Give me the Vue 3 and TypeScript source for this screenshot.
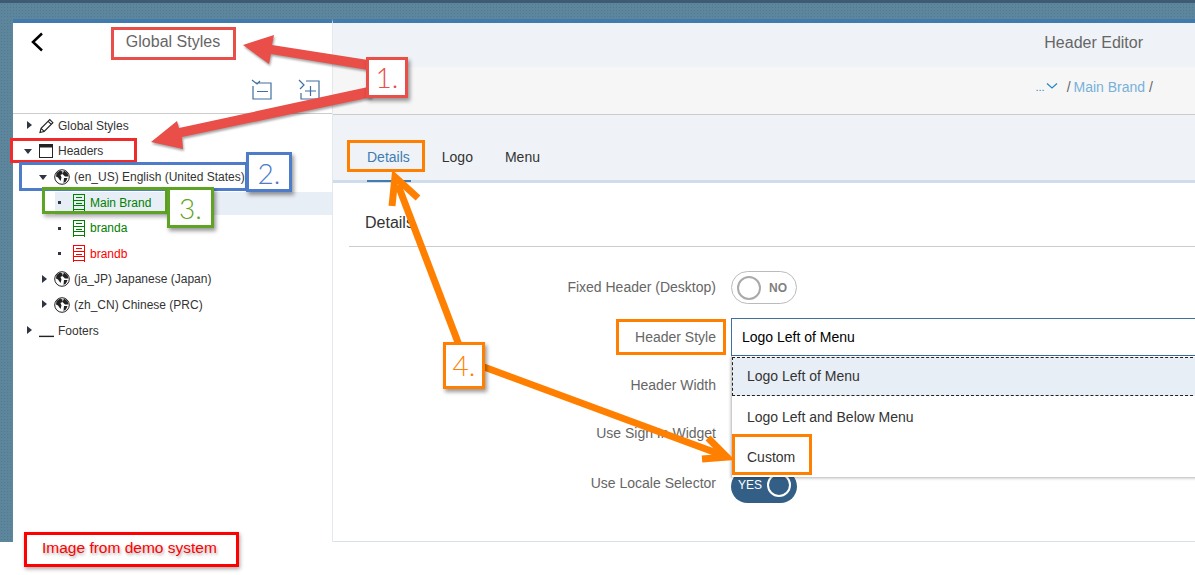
<script setup lang="ts">
const labels = [
  { text: 'Fixed Header (Desktop)', cls: 'r1' },
  { text: 'Header Style', cls: 'r2' },
  { text: 'Header Width', cls: 'r3' },
  { text: 'Use Sign In Widget', cls: 'r4' },
  { text: 'Use Locale Selector', cls: 'r5' },
]
const brands = [
  { name: 'Main Brand', color: 'green', selected: true },
  { name: 'branda', color: 'green', selected: false },
  { name: 'brandb', color: 'red', selected: false },
]
</script>

<template>
  <div class="page">
    <div class="band"></div>
    <div class="shell">
      <aside class="side">
        <div class="side-top">
          <svg class="back" width="14" height="20" viewBox="0 0 14 20"><path d="M12 1.5 3 10l9 8.500" fill="none" stroke="#000" stroke-width="2.500"/></svg>
          <span class="side-title">Global Styles</span>
        </div>
        <div class="side-tools">
          <svg width="22" height="22" viewBox="0 0 22 22" fill="none" stroke="#3f6f9f" stroke-width="1.200"><path d="M2 1l5 4 3-3M5 4H21V20H3V7M7 12.500H18"/></svg>
          <svg width="22" height="22" viewBox="0 0 22 22" fill="none" stroke="#3f6f9f" stroke-width="1.200"><path d="M1 1l5 5-4 4M8 2H21V20H3V14M7 12H18M12.500 7V17"/></svg>
        </div>
        <ul class="tree">
          <li class="row l0"><i class="tri right"></i>
            <svg class="ic" width="15" height="16" viewBox="0 0 16 16" fill="none" stroke="#222" stroke-width="1.200"><path d="M1 15l1.200-4.500L11.500 1.200l3.300 3.300-9.300 9.300zM9.800 3l3.300 3.300M2.200 10.500l3.300 3.300"/></svg>
            <span>Global Styles</span></li>
          <li class="row l0"><i class="tri down"></i>
            <svg class="ic wide" width="14" height="14" viewBox="0 0 14 14"><rect x=".5" y=".5" width="13" height="13" fill="#fff" stroke="#222"/><rect x="0" y="0" width="14" height="3.500" fill="#222"/></svg>
            <span>Headers</span></li>
          <li class="row l1"><i class="tri down"></i>
            <svg class="ic" width="16" height="16" viewBox="0 0 16 16"><circle cx="8" cy="8" r="7.300" fill="#fff" stroke="#222"/><path d="M2.500 4l3.500-2.500 2.500 1 0 2.500-2 1 1 2.500-1 3.500-2.500-3.500-2-1zM10 1.500l3.500 2.500 1 3.500-3.500 0-2.500-2.500zM10 9l3.500 0-1.500 3.500-2.500 1.500z" fill="#222"/></svg>
            <span>(en_US) English (United States)</span></li>
          <li v-for="b in brands" :key="b.name" class="row brand" :class="[b.color, { sel: b.selected }]">
            <i class="dot"></i>
            <svg class="ic" width="12" height="17" viewBox="0 0 12 17" fill="none" stroke="currentColor" shape-rendering="crispEdges"><path d="M.5 0V17M11.500 0V17M0 .5H12M0 6.500H12M0 11.500H12M0 15.500H12M3 3.500H9M3 9H9"/></svg>
            <span>{{ b.name }}</span>
          </li>
          <li class="row l1"><i class="tri right"></i>
            <svg class="ic" width="16" height="16" viewBox="0 0 16 16"><circle cx="8" cy="8" r="7.300" fill="#fff" stroke="#222"/><path d="M2.500 4l3.500-2.500 2.500 1 0 2.500-2 1 1 2.500-1 3.500-2.500-3.500-2-1zM10 1.500l3.500 2.500 1 3.500-3.500 0-2.500-2.500zM10 9l3.500 0-1.500 3.500-2.500 1.500z" fill="#222"/></svg>
            <span>(ja_JP) Japanese (Japan)</span></li>
          <li class="row l1"><i class="tri right"></i>
            <svg class="ic" width="16" height="16" viewBox="0 0 16 16"><circle cx="8" cy="8" r="7.300" fill="#fff" stroke="#222"/><path d="M2.500 4l3.500-2.500 2.500 1 0 2.500-2 1 1 2.500-1 3.500-2.500-3.500-2-1zM10 1.500l3.500 2.500 1 3.500-3.500 0-2.500-2.500zM10 9l3.500 0-1.500 3.500-2.500 1.500z" fill="#222"/></svg>
            <span>(zh_CN) Chinese (PRC)</span></li>
          <li class="row l0"><i class="tri right"></i>
            <svg class="ic" width="15" height="16" viewBox="0 0 16 16"><rect x="0" y="13" width="16" height="1.500" fill="#222"/></svg>
            <span>Footers</span></li>
        </ul>
      </aside>

      <main class="main">
        <header class="main-head"><span>Header Editor</span></header>
        <nav class="crumbs">
          <span class="more">...</span>
          <svg class="chev" width="12" height="8" viewBox="0 0 12 8"><path d="M1 1.500l5 4.500 5-4.500" fill="none" stroke="#1b86c4" stroke-width="1.100"/></svg>
          <span class="sep">/</span><span class="crumb">Main Brand</span><span class="sep">/</span>
        </nav>
        <div class="tabs">
          <span class="tab active">Details</span>
          <span class="tab">Logo</span>
          <span class="tab">Menu</span>
        </div>
        <section class="content">
          <h2 class="heading">Details</h2>
          <div class="form">
            <div class="labels">
              <span v-for="l in labels" :key="l.text" class="label" :class="l.cls">{{ l.text }}</span>
            </div>
            <div class="controls">
              <div class="switch off"><i class="knob"></i><b>NO</b></div>
              <div class="select">Logo Left of Menu</div>
              <div class="switch on"><b>YES</b><i class="knob"></i></div>
              <ul class="menu">
                <li class="opt focus">Logo Left of Menu</li>
                <li class="opt">Logo Left and Below Menu</li>
                <li class="opt">Custom</li>
              </ul>
            </div>
          </div>
        </section>
      </main>
    </div>

    <svg class="arrows" width="1195" height="575" viewBox="0 0 1195 575">
      <g fill="#e94e48">
        <path d="M243 45 274 35 272 45 368 60 368 70 271 54 269 64Z" class="sh"/>
        <path d="M151 142 177 121 179 128 368 87 372 97 182 137 183 149Z" class="sh"/>
      </g>
      <g fill="none" stroke="#ff8000" stroke-width="7">
        <path d="M459 345 398 185"/>
        <path d="M392 206 395 177 418 198"/>
        <path d="M484 367 722 455"/>
        <path d="M708 438 727 457 702 459"/>
      </g>
    </svg>

    <div class="box b-title"></div>
    <div class="tag t1">1.</div>
    <div class="box b-head"></div>
    <div class="box b-loc"></div>
    <div class="tag t2">2.</div>
    <div class="box b-brand"></div>
    <div class="tag t3">3.</div>
    <div class="box b-det"></div>
    <div class="box b-style"></div>
    <div class="tag t4">4.</div>
    <div class="box b-cust"></div>
    <div class="demo">Image from demo system</div>
  </div>
</template>

<style>
html, body { margin: 0; background: #fff; }
</style>

<style scoped>
.page {
  position: relative;
  width: 1195px;
  height: 575px;
  overflow: hidden;
  background: #fff;
  font-family: "Liberation Sans", Arial, sans-serif;
}
.band {
  height: 19px;
  box-sizing: border-box;
  border-top: 3px solid #3f5b74;
  background: radial-gradient(#527a8f 1px, #5d869c 1px) 0 0 / 3px 3px;
}
.shell {
  display: flex;
  height: 523px;
  box-sizing: border-box;
  padding-left: 13px;
  background: radial-gradient(#527a8f 1px, #5d869c 1px) 0 0 / 3px 3px;
}
.side {
  width: 319px;
  flex: none;
  background: #fff;
  border-top: 4px solid #417bad;
  border-right: 1px solid #e4e8ee;
}
.side-top {
  height: 38px;
  position: relative;
  display: flex;
  justify-content: center;
  align-items: center;
  padding-left: 1px;
  box-sizing: border-box;
}
.back { position: absolute; left: 17px; top: 9px; }
.side-title { font-size: 16px; color: #666; }
.side-tools {
  height: 53px;
  box-sizing: border-box;
  border-bottom: 1px solid #ccc;
  display: flex;
  justify-content: flex-end;
  align-items: flex-start;
  gap: 26px;
  padding: 18px 12px 0 0;
}
.tree { list-style: none; margin: -1px 0 0; padding: 0; font-size: 12px; color: #333; }
.row { display: flex; align-items: center; height: 25.600px; white-space: nowrap; }
.row .ic { flex: none; margin-right: 4px; }
.row .ic.wide { margin-right: 5px; }
.l0 { padding-left: 12px; }
.l1 { padding-left: 27px; }
.tri { flex: none; display: block; width: 14px; position: relative; height: 10px; }
.tri::before { content: ""; position: absolute; border-style: solid; }
.tri.right::before { border-width: 4.500px 0 4.500px 5px; border-color: transparent transparent transparent #2f3542; left: 2px; top: .5px; }
.tri.down::before { border-width: 5px 4.500px 0; border-color: #2f3542 transparent transparent; top: 3px; left: -1px; }
.brand { margin-left: 42px; padding-left: 3px; }
.brand .ic { margin-right: 5px; }
.brand.sel { background: linear-gradient(#e8eef6, #e8eef6) 0 2px / 100% 23px no-repeat; }
.brand.green { color: #008000; }
.brand.red { color: #f00; }
.dot { width: 3px; height: 3px; background: #2f3542; margin-right: 12px; flex: none; }

.main { flex: 1; display: flex; flex-direction: column; min-width: 0; border-top: 4px solid #417bad; border-bottom: 1px solid #d9e1e8; }
.main-head {
  height: 44px;
  flex: none;
  background: #eff3f8;
  display: flex;
  align-items: center;
  justify-content: flex-end;
  padding-right: 52px;
  font-size: 16px;
  color: #666;
  padding-bottom: 4px;
  box-sizing: border-box;
}
.crumbs {
  height: 48px;
  flex: none;
  box-sizing: border-box;
  background: #f6f6f6;
  border-bottom: 1px solid #ccc;
  display: flex;
  justify-content: flex-end;
  align-items: flex-start;
  padding: 12px 42px 0 0;
  font-size: 14px;
  color: #666;
}
.more { color: #1b86c4; font-size: 11px; line-height: 16px; }
.chev { margin: 3px 9px 0 1px; }
.crumb { color: #76b1d9; margin: 0 4px 0 3px; }
.tabs {
  height: 68px;
  flex: none;
  box-sizing: border-box;
  background: #eff3f8;
  border-bottom: 3px solid #cfdcec;
  display: flex;
  align-items: flex-end;
  gap: 32px;
  padding-left: 34px;
  font-size: 14px;
  color: #333;
}
.tab { height: 34px; box-sizing: border-box; position: relative; line-height: 22px; }
.tab.active { color: #3f7cb0; }
.tab.active::after { content: ""; position: absolute; left: 0; right: -1px; bottom: -2px; height: 2px; background: #3f7cb0; }
.content { flex: 1; background: #fff; padding: 0 0 0 16px; min-height: 0; overflow: hidden; }
.heading {
  margin: 0;
  height: 64px;
  box-sizing: border-box;
  border-bottom: 1px solid #ccc;
  font-size: 16px;
  font-weight: 400;
  color: #333;
  padding: 31px 0 0 16px;
  line-height: 18px;
}
.form { display: flex; position: relative; }
.labels { width: 367px; flex: none; position: relative; height: 260px; }
.label { position: absolute; right: 0; font-size: 14px; color: #666; white-space: nowrap; line-height: 16px; }
.r1 { top: 32px; }
.r2 { top: 82px; }
.r3 { top: 130px; }
.r4 { top: 178px; }
.r5 { top: 228px; }
.controls { flex: 1; margin: 0 -3px 0 15px; position: relative; padding-top: 24px; }
.switch {
  width: 66px;
  height: 33px;
  box-sizing: border-box;
  border-radius: 17px;
  display: flex;
  align-items: center;
  font-size: 12px;
}
.switch.off { border: 1px solid #bbb; background: #fff; color: #808080; padding-left: 5px; gap: 8px; }
.switch.off .knob { border-color: #aaa; }
.switch b { font-weight: 700; }
.knob { display: block; width: 24px; height: 24px; box-sizing: border-box; border: 2px solid #fff; border-radius: 50%; flex: none; }
.select {
  margin-top: 14px;
  height: 38px;
  box-sizing: border-box;
  border: 1px solid #3f6f9f;
  font-size: 14px;
  line-height: 36px;
  padding-left: 10px;
  color: #000;
}
.switch.on {
  background: #335f87;
  color: #fff;
  margin-top: 114px;
  padding: 0 0 4px 7px;
  gap: 5px;
}
.switch.on b { font-weight: 400; }
.menu {
  position: absolute;
  top: 109px;
  left: 0;
  right: 0;
  height: 121px;
  box-sizing: border-box;
  margin: 0;
  padding: 1px 0 0;
  list-style: none;
  background: #fff;
  border-left: 1px solid #ccc;
  box-shadow: 0 1px 3px rgba(0,0,0,.3);
  font-size: 14px;
  color: #333;
}
.opt { height: 40px; box-sizing: border-box; line-height: 40px; padding-left: 15px; }
.opt.focus { background: #e8eef6; border: 1px dashed #222; line-height: 37px; height: 39px; margin-bottom: 1px; padding-left: 14px; }

.arrows { position: absolute; left: 0; top: 0; pointer-events: none; }
.sh { filter: drop-shadow(1px 2px 1px rgba(0,0,0,.35)); }
.box { position: absolute; box-sizing: border-box; border-style: solid; border-width: 3px; }
.tag {
  position: absolute;
  box-sizing: border-box;
  border-style: solid;
  border-width: 3px;
  background: #fff;
  font-family: Lato, "Liberation Sans", sans-serif;
  font-weight: 300;
  font-size: 28px;
  text-align: center;
  box-shadow: 2px 3px 4px rgba(0,0,0,.4);
}
.b-title { left: 111px; top: 27px; width: 125px; height: 33px; border-color: #e94e48; }
.t1 { left: 366px; top: 57px; width: 42px; height: 41px; border-color: #e94e48; color: #e94e48; line-height: 35px; }
.b-head { left: 10px; top: 138px; width: 127px; height: 25px; border-color: #f02b2b; }
.b-loc { left: 19px; top: 162px; width: 229px; height: 29px; border-color: #4f7cc9; }
.t2 { left: 246px; top: 152px; width: 46px; height: 40px; border-color: #4f7cc9; color: #4f7cc9; line-height: 36px; }
.b-brand { left: 42px; top: 187px; width: 126px; height: 27px; border-color: #5ea323; box-shadow: 2px 3px 4px rgba(0,0,0,.3); }
.t3 { left: 167px; top: 187px; width: 47px; height: 41px; border-color: #5ea323; color: #5ea323; line-height: 36px; }
.b-det { left: 347px; top: 140px; width: 78px; height: 32px; border-color: #ff8000; }
.b-style { left: 616px; top: 319px; width: 110px; height: 36px; border-color: #ff8000; }
.t4 { left: 443px; top: 342px; width: 42px; height: 47px; border-color: #ff8000; color: #ff8000; line-height: 41px; }
.b-cust { left: 732px; top: 434px; width: 80px; height: 41px; border-color: #ff8000; }
.demo {
  position: absolute;
  left: 24px;
  top: 532px;
  width: 215px;
  height: 35px;
  box-sizing: border-box;
  border: 3px solid #f00;
  background: #fff;
  color: #f00;
  font-size: 15.500px;
  padding-left: 15px;
  line-height: 26px;
  text-shadow: 1px 2px 3px rgba(0,0,0,.35);
  box-shadow: 1px 2px 4px rgba(0,0,0,.35);
}
</style>
